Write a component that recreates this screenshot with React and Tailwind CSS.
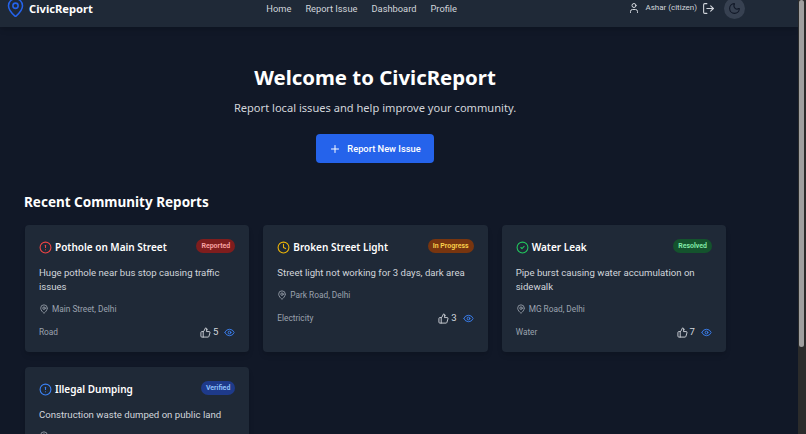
import { AlertCircle, CheckCircle2, Clock, Eye, LogOut, MapPin, Moon, Plus, ThumbsUp, User } from 'lucide-react';

const reports = [
  {
    title: 'Pothole on Main Street',
    description: 'Huge pothole near bus stop causing traffic issues',
    location: 'Main Street, Delhi',
    category: 'Road',
    votes: 5,
    status: 'Reported',
    Icon: AlertCircle,
    iconClass: 'text-[#ef4444]',
    badgeClass: 'bg-[#7f1d1d] text-[#fca5a5]',
  },
  {
    title: 'Broken Street Light',
    description: 'Street light not working for 3 days, dark area',
    location: 'Park Road, Delhi',
    category: 'Electricity',
    votes: 3,
    status: 'In Progress',
    Icon: Clock,
    iconClass: 'text-[#eab308]',
    badgeClass: 'bg-[#78350f] text-[#fcd34d]',
  },
  {
    title: 'Water Leak',
    description: 'Pipe burst causing water accumulation on sidewalk',
    location: 'MG Road, Delhi',
    category: 'Water',
    votes: 7,
    status: 'Resolved',
    Icon: CheckCircle2,
    iconClass: 'text-[#22c55e]',
    badgeClass: 'bg-[#14532d] text-[#86efac]',
  },
  {
    title: 'Illegal Dumping',
    description: 'Construction waste dumped on public land',
    location: '',
    category: '',
    votes: 0,
    status: 'Verified',
    Icon: AlertCircle,
    iconClass: 'text-[#3b82f6]',
    badgeClass: 'bg-[#1e3a8a] text-[#93c5fd]',
  },
];

export default function App() {
  return (
    <div className="flex h-[434px] overflow-hidden bg-[#111827] font-['Noto_Sans',sans-serif] text-white">
      <div className="min-w-0 flex-1">
        <header className="flex h-[27px] items-start justify-between bg-[#1f2937] pr-[53px] pl-[5px] shadow-md">
          <div className="flex h-[18px] items-center">
            <MapPin className="h-[21px] w-[21px] shrink-0 -translate-y-[2px] text-[#2563eb]" strokeWidth={1.75} />
            <span className="ml-[3px] text-[11.2px] font-bold">CivicReport</span>
          </div>
          <nav className="ml-[2px] flex h-[17px] items-center gap-[14px] font-['Roboto',sans-serif] text-[9.3px] text-[#d1d5db]">
            <span>Home</span>
            <span>Report Issue</span>
            <span>Dashboard</span>
            <span>Profile</span>
          </nav>
          <div className="flex h-4 items-center text-[#d1d5db]">
            <User className="h-[12px] w-[12px]" />
            <span className="ml-[5px] font-['Roboto',sans-serif] text-[8px]">Ashar (citizen)</span>
            <LogOut className="ml-[5px] h-[13px] w-[13px]" />
            <div className="ml-[9px] flex h-[21px] w-[21px] shrink-0 items-center justify-center rounded-full bg-[#374151]">
              <Moon className="h-[13px] w-[13px] text-[#111827]" />
            </div>
          </div>
        </header>

        <section className="mt-[37px] flex flex-col items-center pr-[48px]">
          <h1 className="text-[20.4px] leading-[27px] font-bold">Welcome to CivicReport</h1>
          <p className="mt-[8px] text-[11.1px] leading-[18px] text-[#d1d5db]">
            Report local issues and help improve your community.
          </p>
          <button className="mt-[17px] flex h-[29px] w-[118px] items-center justify-center gap-[6px] rounded-[4px] bg-[#2563eb] font-['Roboto',sans-serif] text-[9.3px] font-medium">
            <Plus className="h-[12px] w-[12px]" />
            Report New Issue
          </button>
        </section>

        <h2 className="mt-[29px] ml-[24px] text-[13.5px] leading-[20px] font-bold">Recent Community Reports</h2>

        <div className="mt-[13px] ml-[25px] grid w-[701px] grid-cols-3 gap-x-[14px] gap-y-[15px]">
          {reports.map((report) => (
            <ReportCard key={report.title} report={report} />
          ))}
        </div>
      </div>

      <div className="w-[8px] shrink-0 bg-[#2b2b2b]">
        <div className="ml-[1px] h-[347px] w-[5px] rounded-full bg-[#9f9f9f]" />
      </div>
    </div>
  );
}

function ReportCard({ report }) {
  const { Icon } = report;

  return (
    <article className="h-[127px] rounded-[4px] bg-[#1f2937] px-[14px] pt-[14px] shadow-md">
      <div className="flex items-start justify-between">
        <div className="flex h-[16px] items-center gap-[3px]">
          <Icon className={`h-[13px] w-[13px] ${report.iconClass}`} />
          <h3 className="text-[10px] leading-[16px] font-semibold">{report.title}</h3>
        </div>
        <span className={`rounded-full px-[5px] font-['Roboto',sans-serif] text-[7px] leading-[14px] font-semibold ${report.badgeClass}`}>
          {report.status}
        </span>
      </div>
      <p className="mt-[11px] font-['Roboto',sans-serif] text-[9.6px] leading-[14px] text-[#d1d5db]">{report.description}</p>
      <div className="mt-[9px] flex items-center gap-[3px] font-['Roboto',sans-serif] text-[8.3px] leading-[12px] text-[#9ca3af]">
        <MapPin className="h-[10px] w-[10px]" />
        {report.location}
      </div>
      {report.category && (
        <div className="mt-[10px] flex items-center justify-between font-['Roboto',sans-serif] text-[8.3px] text-[#9ca3af]">
          <span>{report.category}</span>
          <div className="flex items-center">
            <ThumbsUp className="h-[11px] w-[11px] text-[#d1d5db]" />
            <span className="ml-[2px] text-[9.6px] text-[#d1d5db]">{report.votes}</span>
            <Eye className="ml-[6px] h-[11px] w-[11px] text-[#3b82f6]" />
          </div>
        </div>
      )}
    </article>
  );
}
